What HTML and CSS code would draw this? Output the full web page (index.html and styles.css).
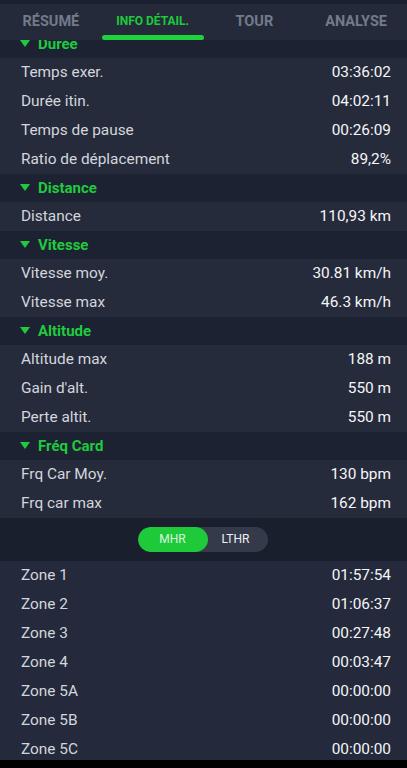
FILE: index.html
```html
<!DOCTYPE html>
<html lang="fr">
<head>
<meta charset="utf-8">
<link rel="stylesheet" href="styles.css">
</head>
<body>
<div class="screen">
  <div class="topstrip"></div>
  <nav class="tabs">
    <div class="tab">RÉSUMÉ</div>
    <div class="tab active">INFO DÉTAIL.</div>
    <div class="tab">TOUR</div>
    <div class="tab">ANALYSE</div>
  </nav>
  <div class="content">
    <div class="section"><span class="tri"></span>Durée</div>
    <div class="row"><span>Temps exer.</span><span class="val">03:36:02</span></div>
    <div class="row"><span>Durée itin.</span><span class="val">04:02:11</span></div>
    <div class="row"><span>Temps de pause</span><span class="val">00:26:09</span></div>
    <div class="row"><span>Ratio de déplacement</span><span class="val">89,2%</span></div>
    <div class="section"><span class="tri"></span>Distance</div>
    <div class="row"><span>Distance</span><span class="val">110,93 km</span></div>
    <div class="section"><span class="tri"></span>Vitesse</div>
    <div class="row"><span>Vitesse moy.</span><span class="val">30.81 km/h</span></div>
    <div class="row"><span>Vitesse max</span><span class="val">46.3 km/h</span></div>
    <div class="section"><span class="tri"></span>Altitude</div>
    <div class="row"><span>Altitude max</span><span class="val">188 m</span></div>
    <div class="row"><span>Gain d'alt.</span><span class="val">550 m</span></div>
    <div class="row"><span>Perte altit.</span><span class="val">550 m</span></div>
    <div class="section"><span class="tri"></span>Fréq Card</div>
    <div class="row"><span>Frq Car Moy.</span><span class="val">130 bpm</span></div>
    <div class="row"><span>Frq car max</span><span class="val">162 bpm</span></div>
    <div class="toggle-bar">
      <div class="toggle">
        <div class="seg on">MHR</div>
        <div class="seg">LTHR</div>
      </div>
    </div>
    <div class="row zone"><span>Zone 1</span><span class="val">01:57:54</span></div>
    <div class="row zone"><span>Zone 2</span><span class="val">01:06:37</span></div>
    <div class="row zone"><span>Zone 3</span><span class="val">00:27:48</span></div>
    <div class="row zone"><span>Zone 4</span><span class="val">00:03:47</span></div>
    <div class="row zone"><span>Zone 5A</span><span class="val">00:00:00</span></div>
    <div class="row zone"><span>Zone 5B</span><span class="val">00:00:00</span></div>
    <div class="row zone"><span>Zone 5C</span><span class="val">00:00:00</span></div>
  </div>
  <div class="bottombar"></div>
</div>
</body>
</html>
```

FILE: styles.css
```css
* { box-sizing: border-box; }
html, body { margin: 0; padding: 0; background: #000; }
body { font-family: Roboto, "Liberation Sans", sans-serif; }

.screen {
  width: 407px;
  height: 768px;
  display: flex;
  flex-direction: column;
  overflow: hidden;
  background: #262b3b;
}

.topstrip { height: 4px; background: #1b2030; flex: none; }

.tabs {
  flex: none;
  height: 36px;
  display: grid;
  grid-template-columns: repeat(4, 1fr);
  background: #252a3a;
  position: relative;
  z-index: 2;
}
.tab {
  display: flex;
  align-items: center;
  justify-content: center;
  font-size: 14.5px;
  font-weight: 700;
  color: #737a8a;
  padding-bottom: 2px;
  position: relative;
}
.tab.active {
  color: #1ec93c;
  font-size: 12px;
}
.tab.active::after {
  content: "";
  position: absolute;
  left: 0;
  right: 0;
  bottom: 0;
  height: 5px;
  border-radius: 3px;
  background: #1ed23c;
}

.content {
  flex: 1;
  min-height: 0;
  overflow: hidden;
  margin-top: -10.5px;
}

.section {
  height: 28px;
  display: flex;
  align-items: center;
  padding-left: 20px;
  background: #1d2232;
  color: #1fcb3d;
  font-size: 15px;
  font-weight: 700;
}
.tri {
  width: 0;
  height: 0;
  border-left: 5.5px solid transparent;
  border-right: 5.5px solid transparent;
  border-top: 7px solid #1fcb3d;
  margin-right: 8px;
}

.row {
  height: 29px;
  display: flex;
  align-items: center;
  justify-content: space-between;
  padding: 0 16px 0 21px;
  background: #262b3b;
  color: #d3d6dd;
  font-size: 15.4px;
}
.row .val { color: #f4f5f7; }

.toggle-bar {
  height: 43px;
  display: flex;
  align-items: center;
  justify-content: center;
  background: #1a1f2e;
  padding-right: 2px;
}
.toggle {
  display: flex;
  width: 130px;
  height: 25px;
  border-radius: 13px;
  background: #343a4a;
  overflow: hidden;
}
.seg {
  display: flex;
  align-items: center;
  justify-content: center;
  font-size: 12px;
  color: #eef0f3;
  width: 60px;
  padding-right: 4px;
}
.seg.on {
  width: 70px;
  padding-right: 0;
  background: #1ec93a;
  border-radius: 13px;
  color: #d9f7df;
}

.row.zone { background: #242a3b; }

.bottombar { flex: none; height: 8px; background: #000; }
```
